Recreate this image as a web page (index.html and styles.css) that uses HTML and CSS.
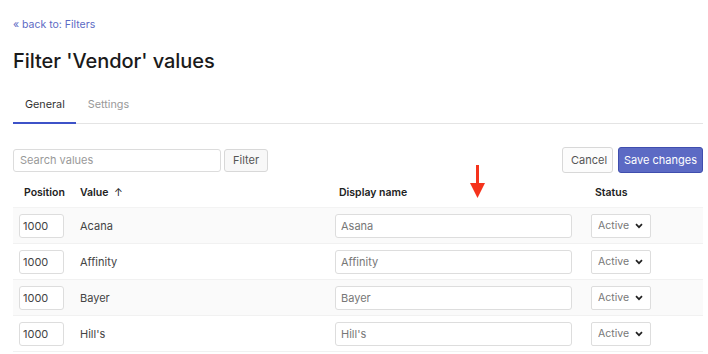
FILE: index.html
```html
<!DOCTYPE html>
<html lang="en">

<head>
    <meta charset="UTF-8">
    <meta name="viewport" content="width=device-width, initial-scale=1.0">
    <title>Filter 'Vendor' values</title>
    <link rel="stylesheet" href="styles.css">
</head>

<body>
    <div class="page">
        <a class="back-link" href="#">&laquo; back to: Filters</a>

        <h1>Filter 'Vendor' values</h1>

        <div class="tabs">
            <a class="tab active" href="#">General</a>
            <a class="tab" href="#">Settings</a>
        </div>

        <div class="toolbar">
            <div class="search">
                <input type="text" class="search-input" placeholder="Search values">
                <button class="btn">Filter</button>
            </div>
            <div class="actions">
                <button class="btn btn-cancel">Cancel</button>
                <button class="btn btn-primary">Save changes</button>
            </div>
        </div>

        <table class="values">
            <thead>
                <tr>
                    <th class="col-pos">Position</th>
                    <th class="col-value">Value <span class="sort">&uarr;</span></th>
                    <th class="col-display">Display name</th>
                    <th class="col-status">Status</th>
                </tr>
            </thead>
            <tbody>
                <tr>
                    <td><input type="text" class="pos-input" value="1000"></td>
                    <td class="value">Acana</td>
                    <td><input type="text" class="name-input" value="Asana"></td>
                    <td><div class="select"><select><option>Active</option></select><svg width="8" height="6" viewBox="0 0 8 6"><path d="M1 1.2 L4 4.2 L7 1.2" fill="none" stroke="#222" stroke-width="1.7"/></svg></div></td>
                </tr>
                <tr>
                    <td><input type="text" class="pos-input" value="1000"></td>
                    <td class="value">Affinity</td>
                    <td><input type="text" class="name-input" value="Affinity"></td>
                    <td><div class="select"><select><option>Active</option></select><svg width="8" height="6" viewBox="0 0 8 6"><path d="M1 1.2 L4 4.2 L7 1.2" fill="none" stroke="#222" stroke-width="1.7"/></svg></div></td>
                </tr>
                <tr>
                    <td><input type="text" class="pos-input" value="1000"></td>
                    <td class="value">Bayer</td>
                    <td><input type="text" class="name-input" value="Bayer"></td>
                    <td><div class="select"><select><option>Active</option></select><svg width="8" height="6" viewBox="0 0 8 6"><path d="M1 1.2 L4 4.2 L7 1.2" fill="none" stroke="#222" stroke-width="1.7"/></svg></div></td>
                </tr>
                <tr>
                    <td><input type="text" class="pos-input" value="1000"></td>
                    <td class="value">Hill's</td>
                    <td><input type="text" class="name-input" value="Hill's"></td>
                    <td><div class="select"><select><option>Active</option></select><svg width="8" height="6" viewBox="0 0 8 6"><path d="M1 1.2 L4 4.2 L7 1.2" fill="none" stroke="#222" stroke-width="1.7"/></svg></div></td>
                </tr>
            </tbody>
        </table>

        <!-- annotation arrow -->
        <svg class="marker" width="16" height="34" viewBox="0 0 16 34">
            <rect x="6" y="0" width="3" height="19" fill="#f5331c"/>
            <polygon points="0,18 15,18 7.5,33" fill="#f5331c"/>
        </svg>
    </div>
</body>

</html>
```

FILE: styles.css
```css
body {
    margin: 0;
    font-family: 'Inter', 'Liberation Sans', sans-serif;
    background-color: #fff;
    color: #333;
}

.page {
    position: relative;
    width: 690px;
    padding: 18px 0 0 13px;
}

.back-link {
    display: block;
    font-size: 10.5px;
    line-height: 14px;
    color: #5c6ac4;
    text-decoration: none;
}

h1 {
    margin: 17px 0 0;
    font-size: 20px;
    font-weight: 500;
    line-height: 24px;
    color: #1a1a1a;
    letter-spacing: -0.05px;
}

.tabs {
    display: flex;
    margin-top: 25px;
    border-bottom: 1px solid #e4e4e4;
}

.tab {
    padding: 0 11px 10px 12px;
    font-size: 10.8px;
    line-height: 14px;
    color: #999;
    text-decoration: none;
    border-bottom: 2px solid transparent;
    margin-bottom: -1px;
}

.tab.active {
    color: #333;
    border-bottom-color: #3d52c8;
}

/* barre de recherche + actions */
.toolbar {
    display: flex;
    justify-content: space-between;
    align-items: center;
    margin-top: 23px;
}

.search {
    display: flex;
    gap: 3px;
}

.search-input {
    width: 208px;
    height: 23px;
    box-sizing: border-box;
    padding: 0 6px;
    border: 1px solid #dcdcdc;
    border-radius: 3px;
    font-family: inherit;
    font-size: 11px;
    color: #333;
}

.search-input::placeholder {
    color: #999;
}

.btn {
    height: 23px;
    padding: 0 8px;
    border: 1px solid #d8d8d8;
    border-radius: 3px;
    background-color: #f8f8f8;
    font-family: inherit;
    font-size: 11px;
    color: #555;
    cursor: pointer;
}

.actions {
    display: flex;
    gap: 5px;
}

.btn-cancel {
    height: 26px;
    width: 51px;
    background-color: #fcfcfc;
    color: #555;
}

.btn-primary {
    height: 26px;
    width: 85px;
    padding: 0;
    background-color: #5c6ac4;
    border-color: #3f4eae;
    color: #fff;
}

/* tableau des valeurs */
.values {
    width: 690px;
    margin-top: 13px;
    border-collapse: collapse;
    font-size: 11px;
}

.values th {
    padding: 0 0 7px 10px;
    line-height: 14px;
    text-align: left;
    font-size: 10.5px;
    font-weight: 600;
    color: #222;
}

.values th.col-pos {
    width: 50px;
    padding-left: 11px;
}

.values th.col-value {
    width: 249px;
    padding-left: 6px;
}

.values th.col-display {
    width: 246px;
}

.sort {
    font-weight: 400;
    margin-left: 3px;
}

.values td {
    height: 36px;
    padding: 0 6px;
    box-sizing: border-box;
    vertical-align: middle;
    color: #444;
}

.values tbody tr {
    border-bottom: 1px solid #f1f1f1;
}

.values tbody tr:nth-child(odd) {
    background-color: #fafafa;
}

.values tbody tr:first-child {
    border-top: 1px solid #f3f3f3;
}

.values td input {
    height: 24px;
    box-sizing: border-box;
    padding: 0 3px 0 5px;
    border: 1px solid #dddddd;
    border-radius: 3px;
    background-color: #fff;
    font-family: inherit;
    font-size: 11px;
}

.pos-input {
    width: 45px;
    color: #444;
    padding-left: 3px !important;
}

.name-input {
    width: 237px;
    color: #777;
}

.select {
    position: relative;
    display: inline-block;
}

.select select {
    appearance: none;
    -webkit-appearance: none;
    width: 60px;
    height: 24px;
    padding: 0 0 0 6px;
    border: 1px solid #dddddd;
    border-radius: 2px;
    background-color: #fff;
    font-family: inherit;
    font-size: 10.5px;
    color: #777;
}

.select svg {
    position: absolute;
    right: 8px;
    top: 9px;
    pointer-events: none;
}

.marker {
    position: absolute;
    left: 470px;
    top: 165px;
}
```
